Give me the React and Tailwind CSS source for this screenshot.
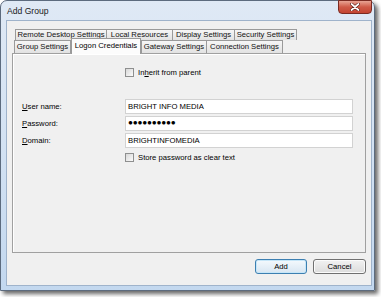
export default function App() {
  const tab =
    "h-full flex items-center justify-center border-t border-l border-r border-[#9a9a9a] bg-linear-to-b from-[#f6f6f6] to-[#e2e2e2] text-[#111] whitespace-nowrap";
  return (
    <div className="w-[381px] h-[297px] bg-white overflow-hidden font-['Liberation_Sans',Arial,sans-serif] text-[7.7px] leading-none text-black">
      <div className="w-[375px] h-[291px] rounded-t-[7px] border border-[#5c6b7e] bg-linear-to-b from-[#dfe9f5] via-[#d3e2f3] to-[#c3d8ef] shadow-[3px_3px_4px_rgba(0,0,0,0.6)] flex flex-col pl-[5px] pr-[2px] pb-[4px]">
        {/* title bar */}
        <div className="h-[19px] flex items-start justify-between">
          <div className="pt-[6px] pl-[1px] text-[8.6px] text-[#1b1b1b]">Add Group</div>
          <div className="w-[34px] h-[14px] -mt-[1px] rounded-b-[4px] border border-[#7a2a22] bg-linear-to-b from-[#e8a394] via-[#cf5a48] to-[#c44532] flex items-center justify-center">
            <svg width="10" height="8" viewBox="0 0 10 8">
              <path d="M1.5 1 L8.5 7 M8.5 1 L1.5 7" stroke="#5a1d16" strokeWidth="3" strokeLinecap="round" />
              <path d="M1.5 1 L8.5 7 M8.5 1 L1.5 7" stroke="#ffffff" strokeWidth="1.7" strokeLinecap="round" />
            </svg>
          </div>
        </div>
        {/* client */}
        <div className="flex-1 bg-[#f0f0f0] border border-[#9fb3cb] flex flex-col pt-[8px]">
          {/* tab row 1 */}
          <div className="h-[11px] flex ml-[8px]">
            <div className={`${tab} w-[92px]`}>Remote Desktop Settings</div>
            <div className={`${tab} w-[66px] border-l-0`}>Local Resources</div>
            <div className={`${tab} w-[62px] border-l-0`}>Display Settings</div>
            <div className={`${tab} w-[62px] border-l-0`}>Security Settings</div>
          </div>
          {/* tab row 2 */}
          <div className="h-[13px] flex ml-[7px] items-end relative z-10">
            <div className={`${tab} w-[57px]`}>Group Settings</div>
            <div className="w-[70px] h-[16px] -mb-[1px] flex items-start pt-[3px] justify-center border-t border-l border-r border-[#9a9a9a] bg-[#fcfcfc] whitespace-nowrap">
              Logon Credentials
            </div>
            <div className={`${tab} w-[66px]`}>Gateway Settings</div>
            <div className={`${tab} w-[76px] border-l-0`}>Connection Settings</div>
          </div>
          {/* panel */}
          <div className="ml-[5px] w-[354px] h-[200px] border border-[#a0a0a0] shadow-[inset_1px_1px_0_#ffffff] flex flex-col pt-[14px]">
            <div className="flex items-center ml-[112px] h-[9px]">
              <div className="w-[9px] h-[9px] border border-[#8e8f8f] bg-linear-to-br from-[#d8d8d8] to-[#fbfbfb]" />
              <span className="ml-[4px]">
                In<span className="underline">h</span>erit from parent
              </span>
            </div>
            <div className="mt-[22px] flex flex-col gap-[2px]">
              <div className="flex items-center">
                <div className="w-[112px] pl-[9px]">
                  <span className="underline">U</span>ser name:
                </div>
                <div className="w-[228px] h-[15px] bg-white border border-[#d2d2d2] flex items-center pl-[2px]">
                  BRIGHT INFO MEDIA
                </div>
              </div>
              <div className="flex items-center">
                <div className="w-[112px] pl-[9px]">
                  <span className="underline">P</span>assword:
                </div>
                <div className="w-[228px] h-[15px] bg-white border border-[#d2d2d2] flex items-center pl-[2px] text-[8.2px] tracking-[-0.2px]">
                  ●●●●●●●●●●
                </div>
              </div>
              <div className="flex items-center">
                <div className="w-[112px] pl-[9px]">
                  <span className="underline">D</span>omain:
                </div>
                <div className="w-[228px] h-[15px] bg-white border border-[#d2d2d2] flex items-center pl-[2px]">
                  BRIGHTINFOMEDIA
                </div>
              </div>
            </div>
            <div className="flex items-center ml-[112px] mt-[5px] h-[9px]">
              <div className="w-[9px] h-[9px] border border-[#8e8f8f] bg-linear-to-br from-[#d8d8d8] to-[#fbfbfb]" />
              <span className="ml-[4px]">Store password as clear text</span>
            </div>
          </div>
          {/* buttons */}
          <div className="mt-[6px] ml-[5px] w-[354px] flex justify-end gap-[6px]">
            <div className="w-[52px] h-[15px] rounded-[3px] border border-[#3c7fb1] bg-linear-to-b from-[#f4f9fd] to-[#d8e6f2] shadow-[inset_0_0_0_1px_#c6e6f8] flex items-center justify-center">
              Add
            </div>
            <div className="w-[53px] h-[15px] rounded-[3px] border border-[#707070] bg-linear-to-b from-[#f2f2f2] to-[#dcdcdc] shadow-[inset_0_0_0_1px_#fbfbfb] flex items-center justify-center">
              Cancel
            </div>
          </div>
        </div>
      </div>
    </div>
  );
}
